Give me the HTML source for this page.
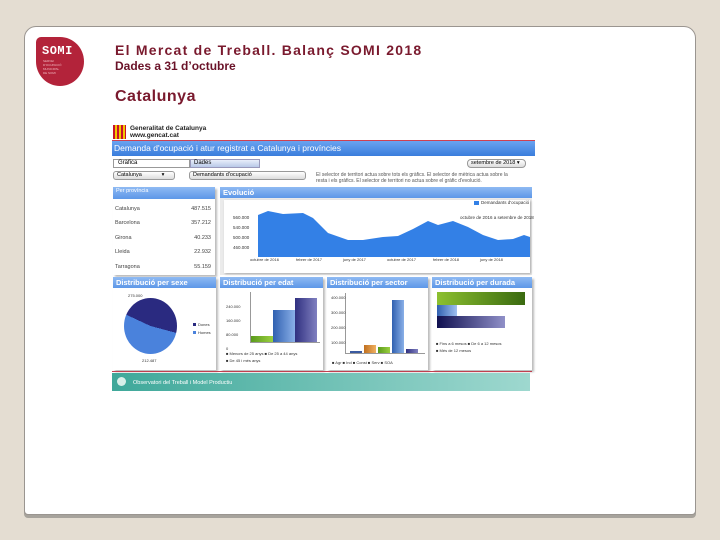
<!DOCTYPE html>
<html><head><meta charset="utf-8"><style>
*{margin:0;padding:0;box-sizing:border-box}
body{width:720px;height:540px;background:#e4ddd2;position:relative;overflow:hidden;font-family:"Liberation Sans",sans-serif}
.a{position:absolute}
.slide{left:24px;top:26px;width:672px;height:489px;background:#fff;border:1px solid #9a9590;border-radius:12px 12px 4px 4px;box-shadow:0 3px 0 #a7a39c}
.t{font-size:7px;color:#333;white-space:nowrap}
.hd{background:linear-gradient(#8fbaf3,#5d97e8);color:#fff;font-size:7.5px;font-weight:bold;padding:1px 3px}
.pn{background:#fff;box-shadow:2px 2px 2px #bbb}
.x{position:absolute;top:257px;font-size:4px;color:#333;white-space:nowrap}
</style></head><body>
<div class="a slide"></div>
<div class="a" style="left:36px;top:37px;width:48px;height:49px;background:#b3233a;border-radius:5px 50% 50% 50%"></div>
<div class="a" style="left:42px;top:44px;color:#fff;font:bold 12px 'Liberation Mono',monospace;letter-spacing:0.5px">SOMI</div>
<div class="a" style="left:43px;top:59px;color:#f0b8c0;font-size:3px;line-height:4px">SERVEI<br>D'OCUPACIÓ<br>MUNICIPAL<br>DE SOMI</div>
<div class="a" style="left:115px;top:42px;color:#7a1a2e;font-size:14px;font-weight:bold;letter-spacing:1.25px">El Mercat de Treball. Balanç SOMI 2018</div>
<div class="a" style="left:115px;top:59px;color:#6a1228;font-size:12px;font-weight:bold">Dades a 31 d’octubre</div>
<div class="a" style="left:115px;top:88px;color:#7a1a2e;font-size:16px;font-weight:bold;letter-spacing:0.5px">Catalunya</div>

<div class="a" style="left:113px;top:125px;width:13px;height:14px;background:repeating-linear-gradient(90deg,#c8102e 0 2px,#f2c700 2px 4px)"></div>
<div class="a t" style="left:130px;top:125px;font-weight:bold;font-size:6.5px;line-height:7px;color:#222">Generalitat de Catalunya<br>www.gencat.cat</div>
<div class="a" style="left:112px;top:140px;width:423px;height:1px;background:#d04050"></div>
<div class="a" style="left:112px;top:141px;width:423px;height:15px;background:linear-gradient(#6aa3f0,#3a7ddc);color:#fff;font-size:8.5px;padding:2px 2px">Demanda d'ocupació i atur registrat a Catalunya i províncies</div>
<div class="a" style="left:113px;top:159px;width:77px;height:9px;border:1px solid #999;font-size:6px;padding-left:4px;line-height:7px">Gràfica</div>
<div class="a" style="left:190px;top:159px;width:70px;height:9px;border:1px solid #99b;background:linear-gradient(#e8eefa,#b9c9e8);font-size:6px;padding-left:3px;line-height:7px">Dades</div>
<div class="a" style="left:467px;top:159px;width:59px;height:9px;border:1px solid #999;border-radius:4px;background:linear-gradient(#fff,#ddd);font-size:5.5px;padding-left:3px;line-height:7px">setembre de 2018 ▾</div>
<div class="a" style="left:113px;top:171px;width:62px;height:9px;border:1px solid #999;border-radius:3px;background:linear-gradient(#fff,#ddd);font-size:5.5px;padding-left:3px;line-height:7px">Catalunya &nbsp; &nbsp; &nbsp; &nbsp; &nbsp; &nbsp; ▾</div>
<div class="a" style="left:189px;top:171px;width:117px;height:9px;border:1px solid #999;border-radius:3px;background:linear-gradient(#fff,#ddd);font-size:5.5px;padding-left:3px;line-height:7px">Demandants d'ocupació</div>
<div class="a t" style="left:316px;top:172px;font-size:5px;line-height:6px;color:#555">El selector de territori actua sobre tots els gràfics. El selector de mètrica actua sobre la<br>resta i els gràfics. El selector de territori no actua sobre el gràfic d'evolució.</div>

<div class="a pn" style="left:113px;top:187px;width:102px;height:88px"></div>
<div class="a hd" style="left:113px;top:187px;width:102px;height:12px;font-weight:normal;font-size:5.5px">Per província</div>
<div class="a t" style="left:115px;top:202px;font-size:5.5px;line-height:14.4px;color:#444">Catalunya<br>Barcelona<br>Girona<br>Lleida<br>Tarragona</div>
<div class="a t" style="left:175px;top:202px;width:36px;text-align:right;font-size:5.5px;line-height:14.4px;color:#444">487.515<br>357.212<br>40.233<br>22.932<br>55.159</div>

<div class="a" style="left:220px;top:187px;width:312px;height:88px;background:#ebebeb"></div>
<div class="a hd" style="left:220px;top:187px;width:312px;height:11px">Evolució</div>
<div class="a" style="left:224px;top:200px;width:306px;height:73px;background:#fff;box-shadow:1px 1px 2px #aaa"></div>
<svg class="a" style="left:258px;top:207px" width="272" height="50"><path d="M0,8 L10,4 L25,7 L45,6 L55,11 L70,26 L90,33 L105,33 L125,30 L140,29 L155,22 L170,14 L180,18 L195,14 L210,20 L225,28 L240,33 L255,32 L266,28 L272,30 L272,50 L0,50Z" fill="#3380e6"/></svg>
<div class="a" style="left:474px;top:201px;width:5px;height:4px;background:#3380e6"></div>
<div class="a t" style="left:481px;top:200px;font-size:4.5px">Demandants d'ocupació</div>
<div class="a t" style="left:460px;top:215px;font-size:4.5px">octubre de 2016 a setembre de 2018</div>
<div class="a t" style="left:233px;top:213px;font-size:4.5px;line-height:10px">560.000<br>540.000<br>500.000<br>460.000</div>
<div class="x" style="left:250px">octubre de 2016</div>
<div class="x" style="left:296px">febrer de 2017</div>
<div class="x" style="left:343px">juny de 2017</div>
<div class="x" style="left:387px">octubre de 2017</div>
<div class="x" style="left:433px">febrer de 2018</div>
<div class="x" style="left:480px">juny de 2018</div>

<div class="a pn" style="left:113px;top:277px;width:103px;height:93px"></div>
<div class="a pn" style="left:220px;top:277px;width:103px;height:93px"></div>
<div class="a pn" style="left:327px;top:277px;width:101px;height:93px"></div>
<div class="a pn" style="left:432px;top:277px;width:100px;height:93px"></div>
<div class="a hd" style="left:113px;top:277px;width:103px;height:11px">Distribució per sexe</div>
<div class="a hd" style="left:220px;top:277px;width:103px;height:11px">Distribució per edat</div>
<div class="a hd" style="left:327px;top:277px;width:101px;height:11px">Distribució per sector</div>
<div class="a hd" style="left:432px;top:277px;width:100px;height:11px">Distribució per durada</div>
<div class="a" style="left:124px;top:298px;width:53px;height:56px;border-radius:50%;background:conic-gradient(from 105deg,#4a82dc 0 190deg,#2a2a80 190deg 360deg)"></div>
<div class="a t" style="left:128px;top:293px;font-size:4px">275.000</div>
<div class="a t" style="left:142px;top:358px;font-size:4px">212.487</div>
<div class="a" style="left:193px;top:323px;width:3px;height:3px;background:#2a2a80"></div>
<div class="a t" style="left:198px;top:322px;font-size:4px">Dones</div>
<div class="a" style="left:193px;top:331px;width:3px;height:3px;background:#4a82dc"></div>
<div class="a t" style="left:198px;top:330px;font-size:4px">Homes</div>
<div class="a t" style="left:226px;top:300px;font-size:4px;line-height:14px">240.000<br>160.000<br>80.000<br>0</div>
<div class="a" style="left:250px;top:292px;width:1px;height:50px;background:#999"></div>
<div class="a" style="left:250px;top:342px;width:70px;height:1px;background:#999"></div>
<div class="a" style="left:251px;top:336px;width:22px;height:6px;background:linear-gradient(90deg,#5a9a1c,#9bd040)"></div>
<div class="a" style="left:273px;top:310px;width:22px;height:32px;background:linear-gradient(90deg,#3060b0,#8ab0e8)"></div>
<div class="a" style="left:295px;top:298px;width:22px;height:44px;background:linear-gradient(90deg,#303080,#8080c0)"></div>
<div class="a t" style="left:226px;top:350px;font-size:4px;line-height:7px">■ Menors de 25 anys ■ De 25 a 44 anys<br>■ De 45 i més anys</div>
<div class="a" style="left:345px;top:293px;width:1px;height:60px;background:#999"></div>
<div class="a" style="left:345px;top:353px;width:80px;height:1px;background:#999"></div>
<div class="a" style="left:350px;top:351px;width:12px;height:2px;background:#3a5aa0"></div>
<div class="a" style="left:364px;top:345px;width:12px;height:8px;background:linear-gradient(90deg,#c07020,#f0b060)"></div>
<div class="a" style="left:378px;top:347px;width:12px;height:6px;background:linear-gradient(90deg,#5a9a1c,#9bd040)"></div>
<div class="a" style="left:392px;top:300px;width:12px;height:53px;background:linear-gradient(90deg,#3060b0,#8ab0e8)"></div>
<div class="a" style="left:406px;top:349px;width:12px;height:4px;background:linear-gradient(90deg,#303080,#8080c0)"></div>
<div class="a t" style="left:331px;top:290px;font-size:4px;line-height:15px">400.000<br>300.000<br>200.000<br>100.000</div>
<div class="a t" style="left:332px;top:360px;font-size:4px">■ Agr ■ Ind ■ Const ■ Serv ■ SOA</div>
<div class="a" style="left:437px;top:292px;width:88px;height:13px;background:linear-gradient(90deg,#8cc030,#3a6a10)"></div>
<div class="a" style="left:437px;top:305px;width:20px;height:11px;background:linear-gradient(90deg,#3060b0,#a0c0f0)"></div>
<div class="a" style="left:437px;top:316px;width:68px;height:12px;background:linear-gradient(90deg,#101050,#9090c8)"></div>
<div class="a t" style="left:436px;top:340px;font-size:4px;line-height:7px">■ Fins a 6 mesos ■ De 6 a 12 mesos<br>■ Més de 12 mesos</div>

<div class="a" style="left:112px;top:371px;width:420px;height:1px;background:#c04050"></div>
<div class="a" style="left:112px;top:373px;width:418px;height:18px;background:linear-gradient(90deg,#3fa89a,#9ed8cf)"></div>
<div class="a" style="left:117px;top:377px;width:9px;height:9px;border-radius:50%;background:#d8efe9"></div>
<div class="a t" style="left:133px;top:380px;color:#fff;font-size:5.5px">Observatori del Treball i Model Productiu</div>
</body></html>
